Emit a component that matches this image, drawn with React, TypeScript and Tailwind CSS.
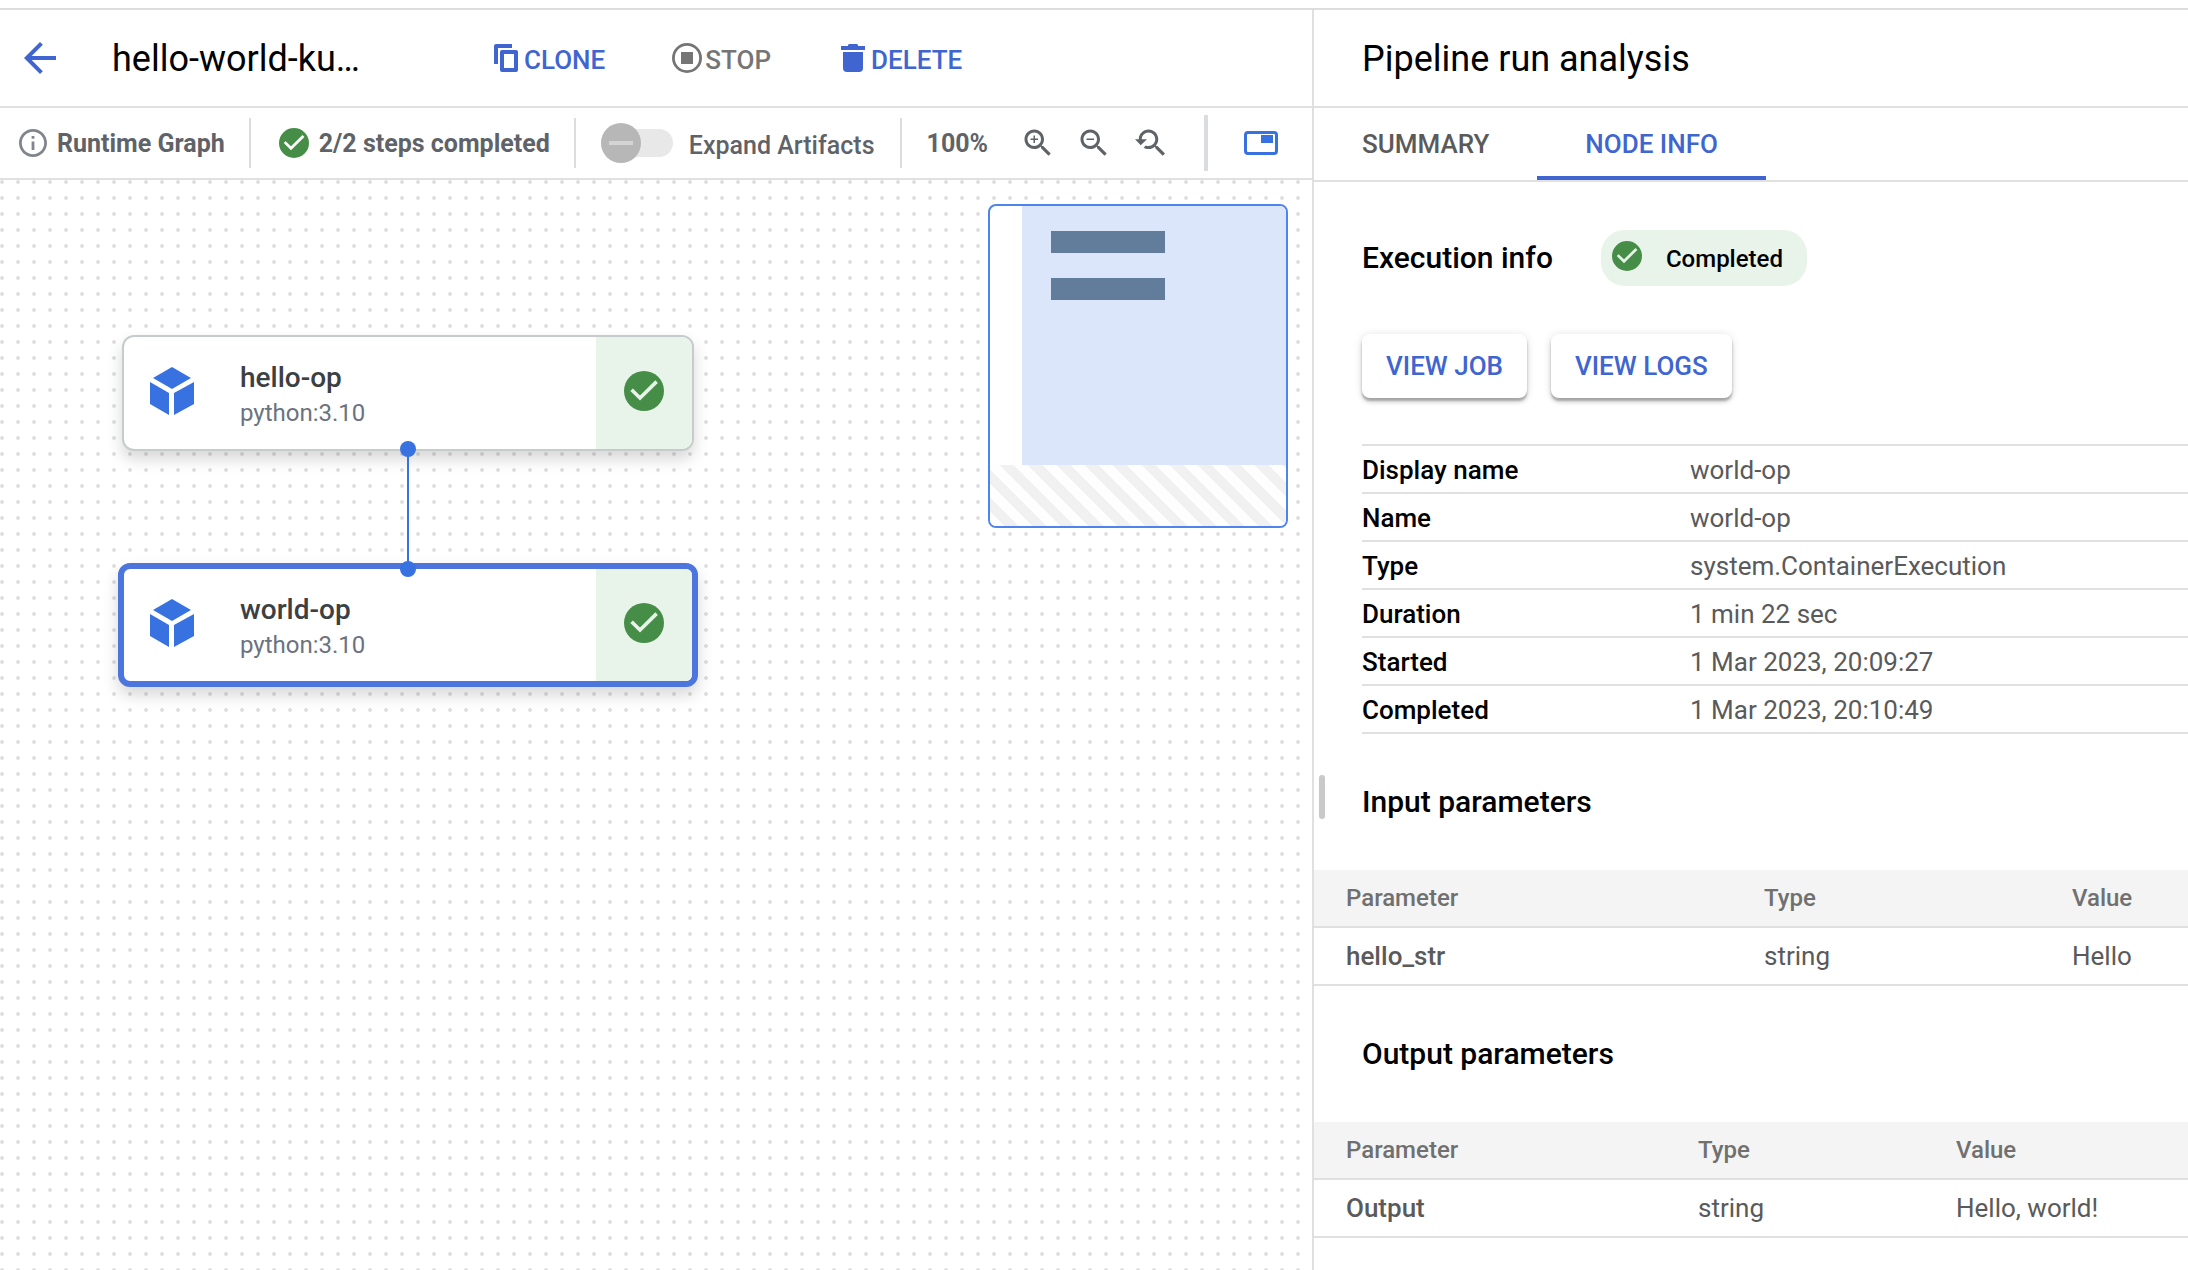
import type { ReactNode } from "react";

function CheckCircle({ className, tick }: { className: string; tick: string }) {
  return (
    <svg viewBox="2 2 20 20" className={className} aria-hidden="true">
      <circle cx="12" cy="12" r="10" className="fill-[#468e48]" />
      <path d="M5.800 11.400L10 15.500L18.300 7.300" fill="none" strokeWidth="1.800" className={tick} />
    </svg>
  );
}

function Cube() {
  return (
    <svg viewBox="0 0 44 48" className="h-12 w-11 fill-[#3871e0]" aria-hidden="true">
      <path d="M22 0L41 11L22 22L3 11Z" />
      <path d="M0 15L19 26V48L0 37Z" />
      <path d="M44 15L24 26V48L44 37Z" />
    </svg>
  );
}

function Divider() {
  return <div className="h-[50px] w-0.5 shrink-0 bg-[#dadce0]" />;
}

function HeaderAction({ label, disabled, children }: { label: string; disabled?: boolean; children: ReactNode }) {
  return (
    <button
      type="button"
      disabled={disabled}
      className="flex items-center text-[26px] leading-8 font-medium text-[#4065d0] disabled:text-[#757575]"
    >
      <svg viewBox="0 0 36 36" className="size-9" fill="currentColor" aria-hidden="true">
        {children}
      </svg>
      <span className="pt-1">{label}</span>
    </button>
  );
}

function ZoomButton({ label, d }: { label: string; d: string }) {
  return (
    <button type="button" aria-label={label} className="text-[#5f6368]">
      <svg viewBox="0 0 24 24" className="size-9" fill="currentColor" aria-hidden="true">
        <path d={d} />
      </svg>
    </button>
  );
}

const lens =
  "M15.500 14h-.79l-.28-.27C15.410 12.590 16 11.110 16 9.500 16 5.910 13.090 3 9.500 3S3 5.910 3 9.500 5.910 16 9.500 16c1.610 0 3.090-.59 4.230-1.570l.27.28v.79l5 4.990L20.490 19l-4.990-5zm-6 0C7.010 14 5 11.990 5 9.500S7.010 5 9.500 5 14 7.010 14 9.500 11.990 14 9.500 14z";

function GraphNode({ name, image, selected, place }: { name: string; image: string; selected?: boolean; place: string }) {
  return (
    <button
      type="button"
      className={
        "absolute flex overflow-hidden bg-white text-left shadow-[0_8px_16px_rgba(0,0,0,0.16)] " +
        (selected
          ? "h-[124px] w-[580px] rounded-xl border-[6px] border-[#4c76de] "
          : "h-[116px] w-[572px] rounded-xl border-2 border-[#c5cccb] ") +
        place
      }
    >
      <span className="flex h-full w-24 items-center justify-center pb-1">
        <Cube />
      </span>
      <span className="flex h-full grow flex-col justify-center pt-1 pl-5">
        <span className="text-[28px] leading-9 font-medium text-[#3c4043]">{name}</span>
        <span className="text-2xl leading-[34px] text-[#6b7280]">{image}</span>
      </span>
      <span className="flex h-full w-24 items-center justify-center bg-[#e8f3e9] pb-1">
        <CheckCircle className="size-10" tick="stroke-[#e8f3e9]" />
      </span>
    </button>
  );
}

const cell = "h-[58px] border-b-2 border-[#e0e0e0] py-0 pl-8";

function ParameterTable({ name, type, value, cols }: { name: string; type: string; value: string; cols: [string, string] }) {
  return (
    <table className="w-full table-fixed border-separate border-spacing-0 text-left">
      <colgroup>
        <col className={cols[0]} />
        <col className={cols[1]} />
        <col />
      </colgroup>
      <thead>
        <tr className="bg-[#f4f4f4] text-2xl text-[#707070]">
          <th className={cell + " font-medium"}>Parameter</th>
          <th className={cell + " font-medium"}>Type</th>
          <th className={cell + " font-medium"}>Value</th>
        </tr>
      </thead>
      <tbody>
        <tr className="text-[26px] leading-8 text-[#5a5a5a]">
          <th className={cell + " font-medium"}>{name}</th>
          <td className={cell}>{type}</td>
          <td className={cell + " whitespace-nowrap"}>{value}</td>
        </tr>
      </tbody>
    </table>
  );
}

const details = [
  ["Display name", "world-op"],
  ["Name", "world-op"],
  ["Type", "system.ContainerExecution"],
  ["Duration", "1 min 22 sec"],
  ["Started", "1 Mar 2023, 20:09:27"],
  ["Completed", "1 Mar 2023, 20:10:49"],
];

const detailCell = "h-12 border-b-2 border-[#e0e0e0] px-0 pt-0.5 pb-0";

const raised =
  "h-16 rounded-lg bg-white px-6 text-[26px] font-medium text-[#4065d0] shadow-[0_1px_10px_rgba(0,0,0,0.12),0_4px_4px_rgba(0,0,0,0.14),0_3px_2px_rgba(0,0,0,0.2)]";

export default function App() {
  return (
    <div className="flex min-h-screen flex-col bg-white pt-2 font-[Roboto,sans-serif]">
      <div className="grid grow grid-cols-[minmax(0,656fr)_minmax(0,438fr)] border-t-2 border-[#dadce0]">
        <main className="flex flex-col">
          <header className="flex h-[98px] items-center border-b-2 border-[#e0e0e0] pl-4">
            <button type="button" aria-label="Back" className="text-[#4065d0]">
              <svg viewBox="0 0 24 24" className="size-12" fill="currentColor" aria-hidden="true">
                <path d="M20 11H7.830l5.590-5.590L12 4l-8 8 8 8 1.410-1.410L7.830 13H20v-2z" />
              </svg>
            </button>
            <h1 className="ml-12 w-[376px] pt-0.5 text-4xl text-black">hello-world-ku…</h1>
            <div className="flex gap-16">
              <HeaderAction label="CLONE">
                <path d="M24 4H8a2 2 0 0 0-2 2V24H10V8H24Z" />
                <path
                  fillRule="evenodd"
                  d="M14 10H28a2 2 0 0 1 2 2V30a2 2 0 0 1-2 2H14a2 2 0 0 1-2-2V12a2 2 0 0 1 2-2ZM16 14V28H26V14Z"
                />
              </HeaderAction>
              <HeaderAction label="STOP" disabled>
                <circle cx="18" cy="18" r="13.600" fill="none" stroke="currentColor" strokeWidth="2.800" />
                <path d="M12 12H24V24H12Z" />
              </HeaderAction>
              <HeaderAction label="DELETE">
                <path d="M6 6H13V5L14 4H22L23 5V6H30V10H6Z" />
                <path d="M8 12H28V28a4 4 0 0 1-4 4H12a4 4 0 0 1-4-4Z" />
              </HeaderAction>
            </div>
          </header>

          <div className="flex h-[72px] items-center border-b-2 border-[#e0e0e0] text-[25px] leading-8 text-[#5f6368]">
            <div className="flex items-center gap-2.5 pr-6 pl-[19px] font-bold">
              <svg viewBox="2 2 20 20" className="size-7" fill="#80868b" aria-hidden="true">
                <path d="M11 7h2v2h-2zm0 4h2v6h-2zm1-9C6.480 2 2 6.480 2 12s4.480 10 10 10 10-4.480 10-10S17.520 2 12 2zm0 18c-4.410 0-8-3.590-8-8s3.590-8 8-8 8 3.590 8 8-3.590 8-8 8z" />
              </svg>
              <span className="pt-0.5">Runtime Graph</span>
            </div>
            <Divider />
            <div className="flex items-center gap-2.5 pr-6 pl-7 font-bold">
              <CheckCircle className="size-[30px]" tick="stroke-white" />
              <span className="pt-0.5">2/2 steps completed</span>
            </div>
            <Divider />
            <label className="flex items-center gap-4 px-[25px] font-medium">
              <input type="checkbox" role="switch" disabled className="peer sr-only" />
              <span className="flex h-7 w-[72px] items-center rounded-full bg-[#e8e8e8]">
                <span className="flex size-10 items-center justify-center rounded-full bg-[#b7b7b7]">
                  <span className="h-1 w-6 bg-[#d4d4d4]" />
                </span>
              </span>
              <span className="pt-1.5">Expand Artifacts</span>
            </label>
            <Divider />
            <div className="flex items-center gap-5 pl-[25px] font-bold">
              <span className="mr-3 pt-0.5">100%</span>
              <ZoomButton label="Zoom in" d={lens + "M12 10h-2v2H9v-2H7V9h2V7h1v2h2v1z"} />
              <ZoomButton label="Zoom out" d={lens + "M7 9h5v1H7z"} />
              <ZoomButton
                label="Reset zoom"
                d="M17.010 14h-.8l-.27-.27c.98-1.140 1.570-2.610 1.570-4.230 0-3.590-2.910-6.500-6.500-6.500s-6.500 3-6.500 6.500H2l3.840 4 4.160-4H6.510C6.510 7 8.530 5 11.010 5s4.500 2.010 4.500 4.500c0 2.480-2.020 4.500-4.500 4.500-.65 0-1.260-.14-1.820-.38L7.710 15.100c.97.57 2.090.9 3.300.9 1.610 0 3.080-.59 4.220-1.570l.27.27v.79l5.010 4.990L22 19l-4.990-5z"
              />
            </div>
            <div className="ml-9 h-14 w-1 shrink-0 bg-[#dadce0]" />
            <button type="button" aria-label="Toggle minimap" className="ml-9">
              <svg viewBox="0 0 34 24" className="h-6 w-[34px]" aria-hidden="true">
                <rect x="1.500" y="1.500" width="31" height="21" rx="2.500" fill="none" stroke="#3871e0" strokeWidth="3" />
                <rect x="17" y="4" width="12" height="8" fill="#3871e0" />
              </svg>
            </button>
          </div>

          <div className="relative grow overflow-hidden bg-[radial-gradient(circle_at_2px_2px,#dedede_1.500px,transparent_2.200px)] bg-[size:16px_16px]">
            <GraphNode name="hello-op" image="python:3.10" place="left-[122px] top-[155px]" />
            <GraphNode name="world-op" image="python:3.10" selected place="left-[118px] top-[383px]" />
            <svg viewBox="0 0 16 136" className="absolute top-[261px] left-[400px] h-[136px] w-4 fill-[#3871e0]" aria-hidden="true">
              <rect x="7" y="8" width="2" height="120" />
              <circle cx="8" cy="8" r="8" />
              <circle cx="8" cy="128" r="8" />
            </svg>

            <div className="absolute top-6 right-6 flex h-[324px] w-[300px] flex-col overflow-hidden rounded-lg border-2 border-[#4f84ee] bg-white">
              <div className="ml-8 flex grow flex-col gap-[25px] bg-[#dbe6fa] pt-[25px] pl-[29px]">
                <div className="h-[22px] w-[114px] bg-[#617d9b]" />
                <div className="h-[22px] w-[114px] bg-[#617d9b]" />
              </div>
              <div className="h-[61px] bg-[repeating-linear-gradient(45deg,#fefefe_0px,#fefefe_10px,#f1f1f1_10px,#f1f1f1_20px)]" />
            </div>
          </div>
        </main>

        <aside className="relative border-l-2 border-[#e0e0e0]">
          <div className="absolute top-[765px] left-[5px] h-11 w-1.5 rounded-full bg-[#c9c9c9]" />
          <div className="flex h-[98px] items-center border-b-2 border-[#e0e0e0] pl-12">
            <h2 className="pt-0.5 text-4xl text-black">Pipeline run analysis</h2>
          </div>
          <div role="tablist" className="flex h-[74px] border-b-2 border-[#e0e0e0] text-[26px] leading-8 font-medium">
            <button type="button" role="tab" aria-selected="false" className="px-12 text-[#5a5a5a]">
              SUMMARY
            </button>
            <button type="button" role="tab" aria-selected="true" className="border-b-4 border-[#4065d0] px-12 pt-1 text-[#4065d0]">
              NODE INFO
            </button>
          </div>

          <section className="pt-12 pl-12 text-black">
            <div className="flex items-center gap-12">
              <h3 className="text-3xl font-medium">Execution info</h3>
              <div className="flex h-14 items-center gap-6 rounded-3xl bg-[#e8f3e9] pr-6 pl-[11px] text-2xl font-medium">
                <CheckCircle className="mb-1 size-[30px]" tick="stroke-[#e8f3e9]" />
                <span className="pt-0.5">Completed</span>
              </div>
            </div>
            <div className="mt-12 flex gap-6">
              <button type="button" className={raised}>
                VIEW JOB
              </button>
              <button type="button" className={raised}>
                VIEW LOGS
              </button>
            </div>
            <table className="mt-[46px] w-full border-separate border-spacing-0 border-t-2 border-[#e0e0e0] text-left text-[26px] leading-8">
              <tbody>
                {details.map(([k, v]) => (
                  <tr key={k}>
                    <th className={detailCell + " w-[328px] font-medium"}>{k}</th>
                    <td className={detailCell + " text-[#5a5a5a]"}>{v}</td>
                  </tr>
                ))}
              </tbody>
            </table>
          </section>

          <h3 className="flex h-34 items-center pl-12 text-3xl font-medium text-black">Input parameters</h3>
          <ParameterTable name="hello_str" type="string" value="Hello" cols={["w-[418px]", "w-[308px]"]} />
          <h3 className="flex h-34 items-center pl-12 text-3xl font-medium text-black">Output parameters</h3>
          <ParameterTable name="Output" type="string" value="Hello, world!" cols={["w-[352px]", "w-[258px]"]} />
        </aside>
      </div>
    </div>
  );
}
